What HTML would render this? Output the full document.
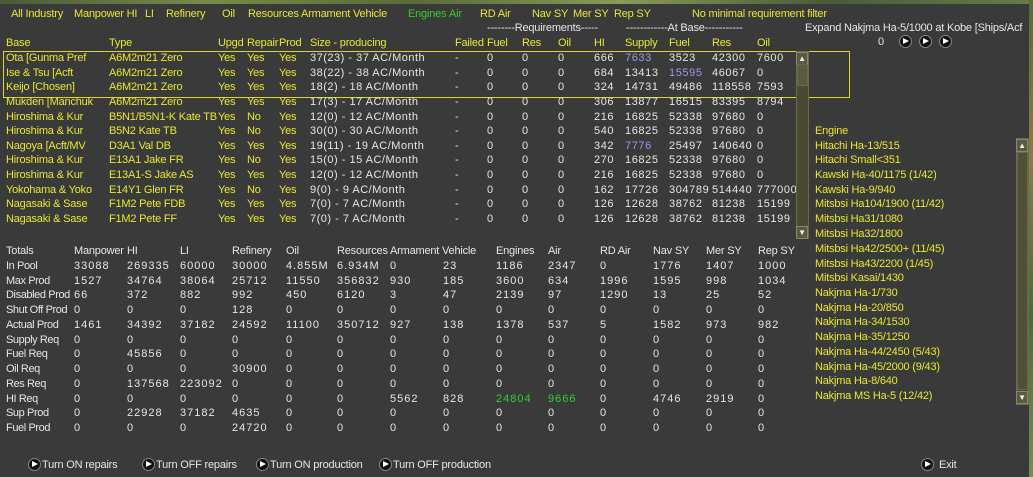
<!DOCTYPE html>
<html><head><meta charset="utf-8"><style>
*{margin:0;padding:0}
body{width:1033px;height:477px;overflow:hidden;background:#3a3a3a;position:relative;font-family:"Liberation Sans",sans-serif;font-size:11px;color:#e6e6e6;letter-spacing:-0.2px}
.top{position:absolute;left:0;top:0;width:1033px;height:4px;background:linear-gradient(90deg,#4a5a3a,#7a8a4a,#5a6a3a,#8a9a5a,#4a5a3a,#6a7a4a)}
.rs{position:absolute;left:1029px;top:0;width:4px;height:477px;background:linear-gradient(#5a6a3a,#8a7a4a,#4a6a3a,#7a8a5a)}
.r{position:absolute;left:0;height:14px;line-height:14px;white-space:nowrap}
.r i{position:absolute;font-style:normal}
.y{color:#e8e830}.g{color:#30d030}.p{color:#9a9aee}
.t1{left:6px}.t2{left:109px}.t3{left:218px}.t4{left:247px}.t5{left:279px}.t6{left:310px}.t7{left:455px}.t8{left:487px}.t9{left:522px}.t10{left:558px}.t11{left:594px}.t12{left:625px}.t13{left:669px}.t14{left:712px}.t15{left:757px}
.d .t6{letter-spacing:0.5px}
.d .t8,.d .t9,.d .t10,.d .t11,.d .t12,.d .t13,.d .t14,.d .t15{letter-spacing:0.6px}
.s1{left:6px}.s2{left:74px}.s3{left:127px}.s4{left:180px}.s5{left:232px}.s6{left:286px}.s7{left:337px}.s8{left:390px}.s9{left:443px}.s10{left:496px}.s11{left:548px}.s12{left:600px}.s13{left:653px}.s14{left:706px}.s15{left:758px}
.box{position:absolute;border:1px solid #d8d830}
.sb{position:absolute;background:#4a4a32;border:1px solid #6a6a48}
.sbb{position:absolute;background:#5a5a40;border:1px solid #8a8a68;width:10px;height:11px;color:#eee;font-size:8px;text-align:center;line-height:11px}
.btn{position:absolute;width:11px;height:11px;border-radius:50%;background:#111;border:1px solid #888}
.btn:after{content:"";position:absolute;left:3px;top:2px;border-left:6px solid #fff;border-top:3.5px solid transparent;border-bottom:3.5px solid transparent}
.tt i:nth-child(2){left:74px}.tt i:nth-child(3){left:127px}.tt i:nth-child(4){left:180px}.tt i:nth-child(5){left:232px}.tt i:nth-child(6){left:286px}.tt i:nth-child(7){left:337px}.tt i:nth-child(8){left:390px}.tt i:nth-child(9){left:443px}.tt i:nth-child(10){left:496px}.tt i:nth-child(11){left:548px}.tt i:nth-child(12){left:600px}.tt i:nth-child(13){left:653px}.tt i:nth-child(14){left:706px}.tt i:nth-child(15){left:758px}.tt i:first-child{left:6px;letter-spacing:-0.4px}
.tt i:not(:first-child){letter-spacing:1px}
</style></head><body>
<div class="top"></div><div class="rs"></div>

<div class="r y" style="top:7px"><i style="left:11px">All Industry</i><i style="left:74px">Manpower HI</i><i style="left:145px">LI</i><i style="left:166px">Refinery</i><i style="left:222px">Oil</i><i style="left:248px">Resources Armament Vehicle</i><i class="g" style="left:408px">Engines</i><i class="g" style="left:449px">Air</i><i style="left:480px">RD Air</i><i style="left:532px">Nav SY</i><i style="left:573px">Mer SY</i><i style="left:614px">Rep SY</i><i style="left:692px">No minimal requirement filter</i></div>
<div class="r" style="top:21px"><i style="left:487px">--------Requirements-----</i><i style="left:626px">------------At Base-----------</i><i style="left:805px">Expand Nakjma Ha-5/1000 at Kobe [Ships/Acf</i></div>
<div class="r" style="top:35px"><i style="left:878px">0</i></div>
<div class="btn" style="left:899px;top:35px"></div><div class="btn" style="left:919px;top:35px"></div><div class="btn" style="left:939px;top:35px"></div>

<div class="r y" style="top:36px"><i class="t1">Base</i><i class="t2">Type</i><i class="t3">Upgd</i><i class="t4">Repair</i><i class="t5">Prod</i><i class="t6">Size - producing</i><i class="t7">Failed</i><i class="t8">Fuel</i><i class="t9">Res</i><i class="t10">Oil</i><i class="t11">HI</i><i class="t12">Supply</i><i class="t13">Fuel</i><i class="t14">Res</i><i class="t15">Oil</i></div>

<div class="box" style="left:3px;top:51px;width:845px;height:45px"></div>

<div class="r d" style="top:51px"><i class="t1 y">Ota [Gunma Pref</i><i class="t2 y">A6M2m21 Zero</i><i class="t3 y">Yes</i><i class="t4 y">Yes</i><i class="t5 y">Yes</i><i class="t6">37(23) - 37 AC/Month</i><i class="t7">-</i><i class="t8">0</i><i class="t9">0</i><i class="t10">0</i><i class="t11">666</i><i class="t12 p">7633</i><i class="t13">3523</i><i class="t14">42300</i><i class="t15">7600</i></div>
<div class="r d" style="top:66px"><i class="t1 y">Ise &amp; Tsu [Acft</i><i class="t2 y">A6M2m21 Zero</i><i class="t3 y">Yes</i><i class="t4 y">Yes</i><i class="t5 y">Yes</i><i class="t6">38(22) - 38 AC/Month</i><i class="t7">-</i><i class="t8">0</i><i class="t9">0</i><i class="t10">0</i><i class="t11">684</i><i class="t12">13413</i><i class="t13 p">15595</i><i class="t14">46067</i><i class="t15">0</i></div>
<div class="r d" style="top:80px"><i class="t1 y">Keijo [Chosen]</i><i class="t2 y">A6M2m21 Zero</i><i class="t3 y">Yes</i><i class="t4 y">Yes</i><i class="t5 y">Yes</i><i class="t6">18(2) - 18 AC/Month</i><i class="t7">-</i><i class="t8">0</i><i class="t9">0</i><i class="t10">0</i><i class="t11">324</i><i class="t12">14731</i><i class="t13">49486</i><i class="t14">118558</i><i class="t15">7593</i></div>
<div class="r d" style="top:95px"><i class="t1 y">Mukden [Manchuk</i><i class="t2 y">A6M2m21 Zero</i><i class="t3 y">Yes</i><i class="t4 y">Yes</i><i class="t5 y">Yes</i><i class="t6">17(3) - 17 AC/Month</i><i class="t7">-</i><i class="t8">0</i><i class="t9">0</i><i class="t10">0</i><i class="t11">306</i><i class="t12">13877</i><i class="t13">16515</i><i class="t14">83395</i><i class="t15">8794</i></div>
<div class="r d" style="top:110px"><i class="t1 y">Hiroshima &amp; Kur</i><i class="t2 y">B5N1/B5N1-K Kate TB</i><i class="t3 y">Yes</i><i class="t4 y">No</i><i class="t5 y">Yes</i><i class="t6">12(0) - 12 AC/Month</i><i class="t7">-</i><i class="t8">0</i><i class="t9">0</i><i class="t10">0</i><i class="t11">216</i><i class="t12">16825</i><i class="t13">52338</i><i class="t14">97680</i><i class="t15">0</i></div>
<div class="r d" style="top:124px"><i class="t1 y">Hiroshima &amp; Kur</i><i class="t2 y">B5N2 Kate TB</i><i class="t3 y">Yes</i><i class="t4 y">No</i><i class="t5 y">Yes</i><i class="t6">30(0) - 30 AC/Month</i><i class="t7">-</i><i class="t8">0</i><i class="t9">0</i><i class="t10">0</i><i class="t11">540</i><i class="t12">16825</i><i class="t13">52338</i><i class="t14">97680</i><i class="t15">0</i></div>
<div class="r d" style="top:139px"><i class="t1 y">Nagoya [Acft/MV</i><i class="t2 y">D3A1 Val DB</i><i class="t3 y">Yes</i><i class="t4 y">Yes</i><i class="t5 y">Yes</i><i class="t6">19(11) - 19 AC/Month</i><i class="t7">-</i><i class="t8">0</i><i class="t9">0</i><i class="t10">0</i><i class="t11">342</i><i class="t12 p">7776</i><i class="t13">25497</i><i class="t14">140640</i><i class="t15">0</i></div>
<div class="r d" style="top:153px"><i class="t1 y">Hiroshima &amp; Kur</i><i class="t2 y">E13A1 Jake FR</i><i class="t3 y">Yes</i><i class="t4 y">No</i><i class="t5 y">Yes</i><i class="t6">15(0) - 15 AC/Month</i><i class="t7">-</i><i class="t8">0</i><i class="t9">0</i><i class="t10">0</i><i class="t11">270</i><i class="t12">16825</i><i class="t13">52338</i><i class="t14">97680</i><i class="t15">0</i></div>
<div class="r d" style="top:168px"><i class="t1 y">Hiroshima &amp; Kur</i><i class="t2 y">E13A1-S Jake AS</i><i class="t3 y">Yes</i><i class="t4 y">Yes</i><i class="t5 y">Yes</i><i class="t6">12(0) - 12 AC/Month</i><i class="t7">-</i><i class="t8">0</i><i class="t9">0</i><i class="t10">0</i><i class="t11">216</i><i class="t12">16825</i><i class="t13">52338</i><i class="t14">97680</i><i class="t15">0</i></div>
<div class="r d" style="top:183px"><i class="t1 y">Yokohama &amp; Yoko</i><i class="t2 y">E14Y1 Glen FR</i><i class="t3 y">Yes</i><i class="t4 y">No</i><i class="t5 y">Yes</i><i class="t6">9(0) - 9 AC/Month</i><i class="t7">-</i><i class="t8">0</i><i class="t9">0</i><i class="t10">0</i><i class="t11">162</i><i class="t12">17726</i><i class="t13">304789</i><i class="t14">514440</i><i class="t15">777000</i></div>
<div class="r d" style="top:197px"><i class="t1 y">Nagasaki &amp; Sase</i><i class="t2 y">F1M2 Pete FDB</i><i class="t3 y">Yes</i><i class="t4 y">Yes</i><i class="t5 y">Yes</i><i class="t6">7(0) - 7 AC/Month</i><i class="t7">-</i><i class="t8">0</i><i class="t9">0</i><i class="t10">0</i><i class="t11">126</i><i class="t12">12628</i><i class="t13">38762</i><i class="t14">81238</i><i class="t15">15199</i></div>
<div class="r d" style="top:212px"><i class="t1 y">Nagasaki &amp; Sase</i><i class="t2 y">F1M2 Pete FF</i><i class="t3 y">Yes</i><i class="t4 y">Yes</i><i class="t5 y">Yes</i><i class="t6">7(0) - 7 AC/Month</i><i class="t7">-</i><i class="t8">0</i><i class="t9">0</i><i class="t10">0</i><i class="t11">126</i><i class="t12">12628</i><i class="t13">38762</i><i class="t14">81238</i><i class="t15">15199</i></div>

<div class="sb" style="left:796px;top:51px;width:11px;height:186px"></div>
<div class="sbb" style="left:796px;top:52px">▲</div>
<div class="sb" style="left:797px;top:64px;width:9px;height:20px;background:#5a5a40"></div>
<div class="sbb" style="left:796px;top:226px">▼</div>

<div class="r" style="top:244px"><i class="s1">Totals</i><i class="s2">Manpower</i><i class="s3">HI</i><i class="s4">LI</i><i class="s5">Refinery</i><i class="s6">Oil</i><i class="s7">Resources</i><i style="left:390px">Armament</i><i style="left:442px">Vehicle</i><i class="s10">Engines</i><i class="s11">Air</i><i class="s12">RD Air</i><i class="s13">Nav SY</i><i class="s14">Mer SY</i><i class="s15">Rep SY</i></div>
<div class="r tt" style="top:259px"><i>In Pool</i><i>33088</i><i>269335</i><i>60000</i><i>30000</i><i>4.855M</i><i>6.934M</i><i>0</i><i>23</i><i>1186</i><i>2347</i><i>0</i><i>1776</i><i>1407</i><i>1000</i></div>
<div class="r tt" style="top:274px"><i>Max Prod</i><i>1527</i><i>34764</i><i>38064</i><i>25712</i><i>11550</i><i>356832</i><i>930</i><i>185</i><i>3600</i><i>634</i><i>1996</i><i>1595</i><i>998</i><i>1034</i></div>
<div class="r tt" style="top:288px"><i>Disabled Prod</i><i>66</i><i>372</i><i>882</i><i>992</i><i>450</i><i>6120</i><i>3</i><i>47</i><i>2139</i><i>97</i><i>1290</i><i>13</i><i>25</i><i>52</i></div>
<div class="r tt" style="top:303px"><i>Shut Off Prod</i><i>0</i><i>0</i><i>0</i><i>128</i><i>0</i><i>0</i><i>0</i><i>0</i><i>0</i><i>0</i><i>0</i><i>0</i><i>0</i><i>0</i></div>
<div class="r tt" style="top:318px"><i>Actual Prod</i><i>1461</i><i>34392</i><i>37182</i><i>24592</i><i>11100</i><i>350712</i><i>927</i><i>138</i><i>1378</i><i>537</i><i>5</i><i>1582</i><i>973</i><i>982</i></div>
<div class="r tt" style="top:333px"><i>Supply Req</i><i>0</i><i>0</i><i>0</i><i>0</i><i>0</i><i>0</i><i>0</i><i>0</i><i>0</i><i>0</i><i>0</i><i>0</i><i>0</i><i>0</i></div>
<div class="r tt" style="top:347px"><i>Fuel Req</i><i>0</i><i>45856</i><i>0</i><i>0</i><i>0</i><i>0</i><i>0</i><i>0</i><i>0</i><i>0</i><i>0</i><i>0</i><i>0</i><i>0</i></div>
<div class="r tt" style="top:362px"><i>Oil Req</i><i>0</i><i>0</i><i>0</i><i>30900</i><i>0</i><i>0</i><i>0</i><i>0</i><i>0</i><i>0</i><i>0</i><i>0</i><i>0</i><i>0</i></div>
<div class="r tt" style="top:377px"><i>Res Req</i><i>0</i><i>137568</i><i>223092</i><i>0</i><i>0</i><i>0</i><i>0</i><i>0</i><i>0</i><i>0</i><i>0</i><i>0</i><i>0</i><i>0</i></div>
<div class="r tt" style="top:392px"><i>HI Req</i><i>0</i><i>0</i><i>0</i><i>0</i><i>0</i><i>0</i><i>5562</i><i>828</i><i class="g">24804</i><i class="g">9666</i><i>0</i><i>4746</i><i>2919</i><i>0</i></div>
<div class="r tt" style="top:406px"><i>Sup Prod</i><i>0</i><i>22928</i><i>37182</i><i>4635</i><i>0</i><i>0</i><i>0</i><i>0</i><i>0</i><i>0</i><i>0</i><i>0</i><i>0</i><i>0</i></div>
<div class="r tt" style="top:421px"><i>Fuel Prod</i><i>0</i><i>0</i><i>0</i><i>24720</i><i>0</i><i>0</i><i>0</i><i>0</i><i>0</i><i>0</i><i>0</i><i>0</i><i>0</i><i>0</i></div>

<div class="r y" style="top:124px"><i style="left:815px">Engine</i></div>
<div class="r y" style="top:139px"><i style="left:815px">Hitachi Ha-13/515</i></div>
<div class="r y" style="top:153px"><i style="left:815px">Hitachi Small&lt;351</i></div>
<div class="r y" style="top:168px"><i style="left:815px">Kawski Ha-40/1175 (1/42)</i></div>
<div class="r y" style="top:183px"><i style="left:815px">Kawski Ha-9/940</i></div>
<div class="r y" style="top:197px"><i style="left:815px">Mitsbsi Ha104/1900 (11/42)</i></div>
<div class="r y" style="top:212px"><i style="left:815px">Mitsbsi Ha31/1080</i></div>
<div class="r y" style="top:227px"><i style="left:815px">Mitsbsi Ha32/1800</i></div>
<div class="r y" style="top:242px"><i style="left:815px">Mitsbsi Ha42/2500+ (11/45)</i></div>
<div class="r y" style="top:257px"><i style="left:815px">Mitsbsi Ha43/2200 (1/45)</i></div>
<div class="r y" style="top:271px"><i style="left:815px">Mitsbsi Kasai/1430</i></div>
<div class="r y" style="top:286px"><i style="left:815px">Nakjma Ha-1/730</i></div>
<div class="r y" style="top:301px"><i style="left:815px">Nakjma Ha-20/850</i></div>
<div class="r y" style="top:315px"><i style="left:815px">Nakjma Ha-34/1530</i></div>
<div class="r y" style="top:330px"><i style="left:815px">Nakjma Ha-35/1250</i></div>
<div class="r y" style="top:345px"><i style="left:815px">Nakjma Ha-44/2450 (5/43)</i></div>
<div class="r y" style="top:360px"><i style="left:815px">Nakjma Ha-45/2000 (9/43)</i></div>
<div class="r y" style="top:374px"><i style="left:815px">Nakjma Ha-8/640</i></div>
<div class="r y" style="top:389px"><i style="left:815px">Nakjma MS Ha-5 (12/42)</i></div>

<div class="sb" style="left:1016px;top:138px;width:11px;height:265px"></div>
<div class="sbb" style="left:1016px;top:139px">▲</div>
<div class="sb" style="left:1017px;top:152px;width:9px;height:236px;background:#50503a"></div>
<div class="sbb" style="left:1016px;top:391px">▼</div>

<div class="btn" style="left:28px;top:458px"></div><div class="r" style="top:458px"><i style="left:42px">Turn ON repairs</i></div>
<div class="btn" style="left:142px;top:458px"></div><div class="r" style="top:458px"><i style="left:156px">Turn OFF repairs</i></div>
<div class="btn" style="left:256px;top:458px"></div><div class="r" style="top:458px"><i style="left:270px">Turn ON production</i></div>
<div class="btn" style="left:379px;top:458px"></div><div class="r" style="top:458px"><i style="left:393px">Turn OFF production</i></div>
<div class="btn" style="left:921px;top:458px"></div><div class="r" style="top:458px"><i style="left:939px">Exit</i></div>
</body></html>
